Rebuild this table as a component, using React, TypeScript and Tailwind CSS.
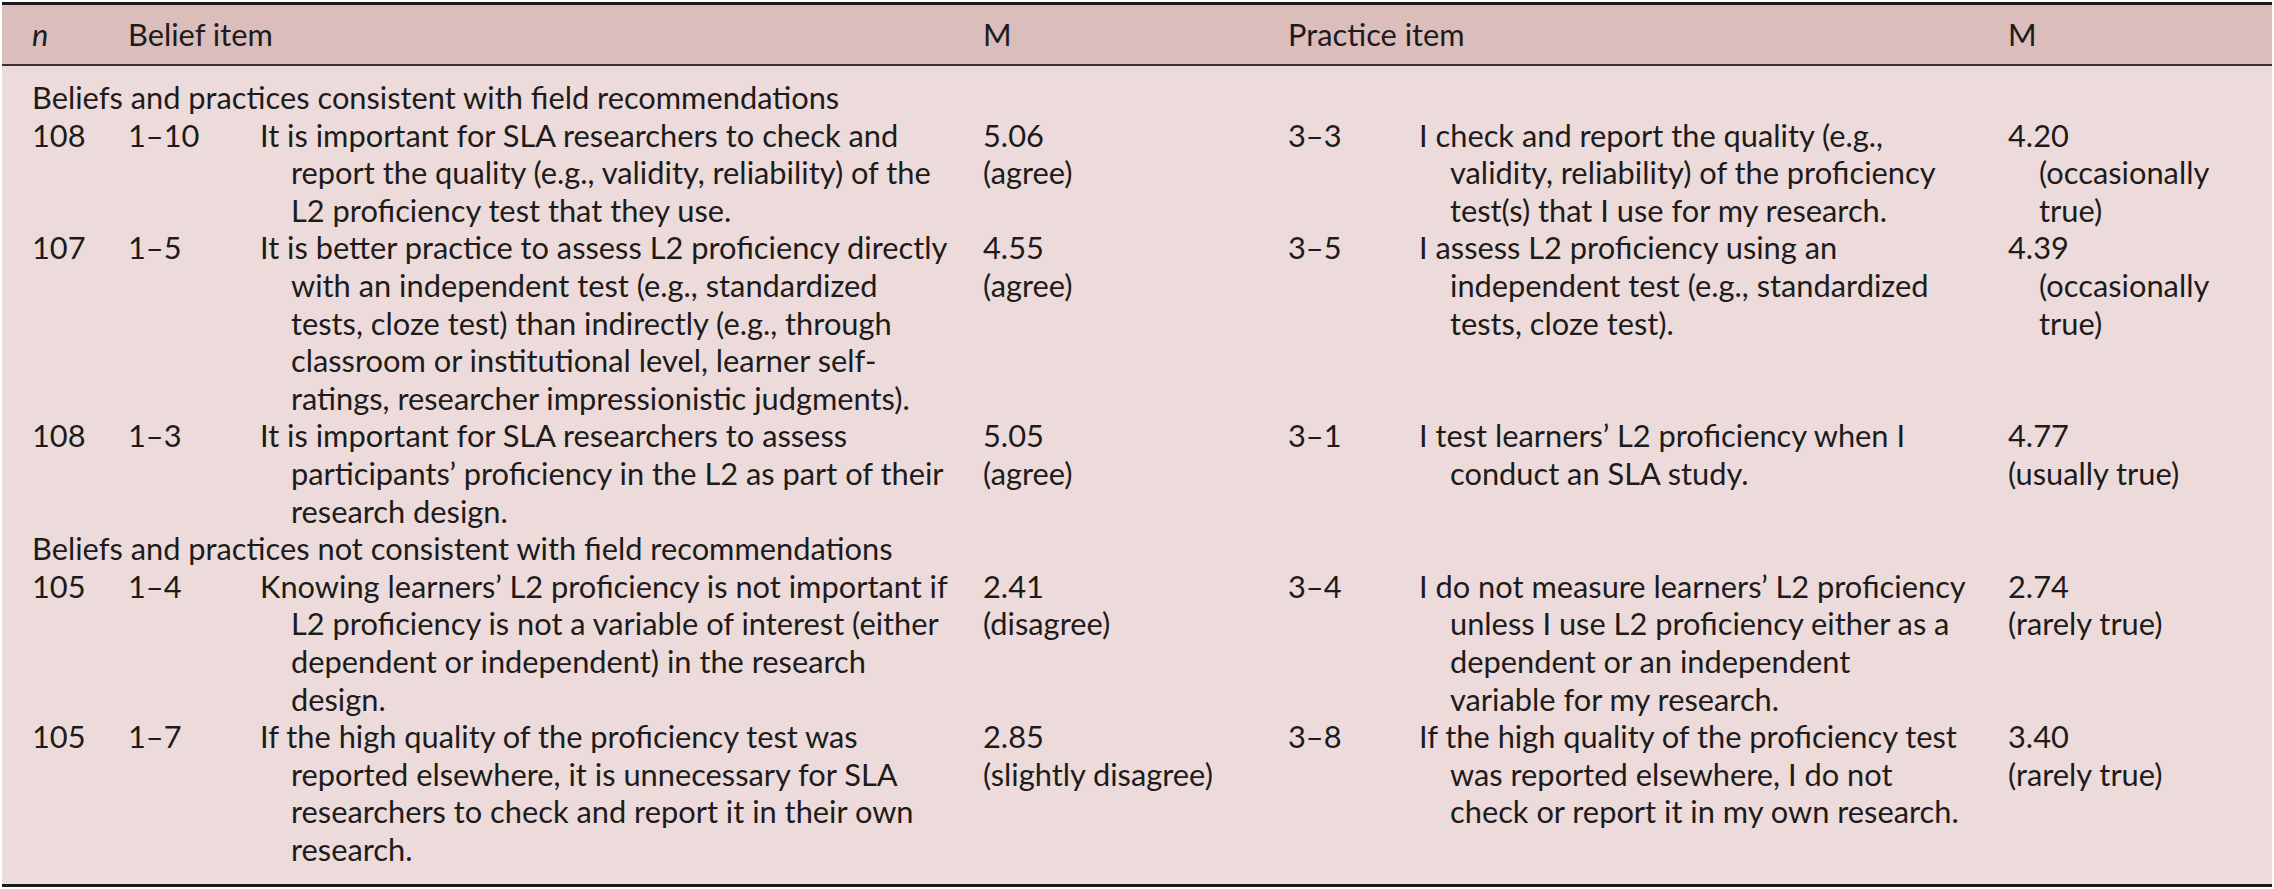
type Row = {
  n: string;
  code: string;
  belief: string[];
  m: string[];
  pcode: string;
  practice: string[];
  m2: string[];
  m2Hang?: boolean;
};

const groups: { title: string; rows: Row[] }[] = [
  {
    title: "Beliefs and practices consistent with field recommendations",
    rows: [
      {
        n: "108",
        code: "1–10",
        belief: [
          "It is important for SLA researchers to check and",
          "report the quality (e.g., validity, reliability) of the",
          "L2 proficiency test that they use.",
        ],
        m: ["5.06", "(agree)"],
        pcode: "3–3",
        practice: [
          "I check and report the quality (e.g.,",
          "validity, reliability) of the proficiency",
          "test(s) that I use for my research.",
        ],
        m2: ["4.20", "(occasionally", "true)"],
        m2Hang: true,
      },
      {
        n: "107",
        code: "1–5",
        belief: [
          "It is better practice to assess L2 proficiency directly",
          "with an independent test (e.g., standardized",
          "tests, cloze test) than indirectly (e.g., through",
          "classroom or institutional level, learner self-",
          "ratings, researcher impressionistic judgments).",
        ],
        m: ["4.55", "(agree)"],
        pcode: "3–5",
        practice: [
          "I assess L2 proficiency using an",
          "independent test (e.g., standardized",
          "tests, cloze test).",
        ],
        m2: ["4.39", "(occasionally", "true)"],
        m2Hang: true,
      },
      {
        n: "108",
        code: "1–3",
        belief: [
          "It is important for SLA researchers to assess",
          "participants’ proficiency in the L2 as part of their",
          "research design.",
        ],
        m: ["5.05", "(agree)"],
        pcode: "3–1",
        practice: ["I test learners’ L2 proficiency when I", "conduct an SLA study."],
        m2: ["4.77", "(usually true)"],
      },
    ],
  },
  {
    title: "Beliefs and practices not consistent with field recommendations",
    rows: [
      {
        n: "105",
        code: "1–4",
        belief: [
          "Knowing learners’ L2 proficiency is not important if",
          "L2 proficiency is not a variable of interest (either",
          "dependent or independent) in the research",
          "design.",
        ],
        m: ["2.41", "(disagree)"],
        pcode: "3–4",
        practice: [
          "I do not measure learners’ L2 proficiency",
          "unless I use L2 proficiency either as a",
          "dependent or an independent",
          "variable for my research.",
        ],
        m2: ["2.74", "(rarely true)"],
      },
      {
        n: "105",
        code: "1–7",
        belief: [
          "If the high quality of the proficiency test was",
          "reported elsewhere, it is unnecessary for SLA",
          "researchers to check and report it in their own",
          "research.",
        ],
        m: ["2.85", "(slightly disagree)"],
        pcode: "3–8",
        practice: [
          "If the high quality of the proficiency test",
          "was reported elsewhere, I do not",
          "check or report it in my own research.",
        ],
        m2: ["3.40", "(rarely true)"],
      },
    ],
  },
];

const cols = "grid grid-cols-[96px_132px_723px_305px_131px_589px_1fr]";

const Lines = ({ lines, hang }: { lines: string[]; hang?: boolean }) => (
  <div className="flex flex-col">
    {lines.map((l, i) => (
      <div key={i} className={`whitespace-nowrap ${hang && i > 0 ? "pl-[31px]" : ""}`}>
        {l}
      </div>
    ))}
  </div>
);

export default function App() {
  return (
    <div className="w-[2274px] h-[889px] bg-white pt-[2px] px-[2px] font-['Lato',sans-serif] text-[30.8px] leading-[37.6px] text-[#1d1b1b]">
      <div className="border-t-[3px] border-b-[3px] border-[#1a1a1a] bg-[#ecdbda]">
        {/* header */}
        <div className={`${cols} h-[61px] items-center pl-[30px] bg-[#dbbdbc] border-b-2 border-[#3a3333]`}>
          <div className="italic">n</div>
          <div className="col-span-2">Belief item</div>
          <div>M</div>
          <div className="col-span-2">Practice item</div>
          <div>M</div>
        </div>

        <div className="pt-[13px] pb-[16px] pl-[30px]">
          {groups.map((g) => (
            <div key={g.title}>
              <div className="whitespace-nowrap">{g.title}</div>
              {g.rows.map((r, i) => (
                <div key={i} className={cols}>
                  <div>{r.n}</div>
                  <div>{r.code}</div>
                  <Lines lines={r.belief} hang />
                  <Lines lines={r.m} />
                  <div>{r.pcode}</div>
                  <Lines lines={r.practice} hang />
                  <Lines lines={r.m2} hang={r.m2Hang} />
                </div>
              ))}
            </div>
          ))}
        </div>
      </div>
    </div>
  );
}
